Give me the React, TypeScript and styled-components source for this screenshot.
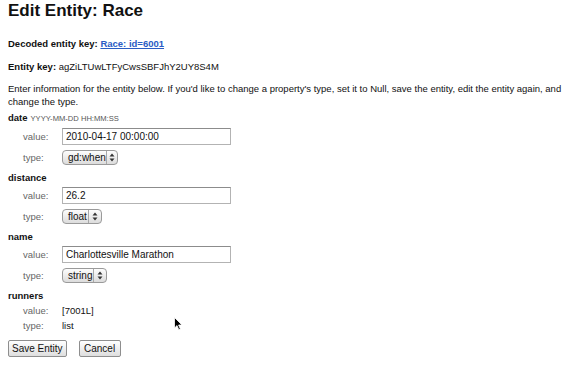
import React from "react";
import styled, { createGlobalStyle } from "styled-components";

const GlobalStyle = createGlobalStyle`
    body {
        margin: 0;
        padding: 0 8px;
        background: #fff;
        color: #111;
        font-family: "Liberation Sans", Arial, sans-serif;
        font-size: 9.5px;
    }
`

const Page = styled.div`
    position: relative;
    height: 369px;
`

const Title = styled.h1`
    margin: 0;
    font-size: 17px;
    line-height: 22px;
    font-weight: bold;
`

const KeyLine = styled.p<{ $top: number }>`
    margin: ${p => p.$top}px 0 0 0;
    line-height: 12px;
`

const Strong = styled.b`
    font-weight: bold;
`

const KeyLink = styled.a`
    color: #2a5cc4;
    font-weight: bold;
    text-decoration: underline;
`

const Intro = styled.p`
    margin: 9px 0 0 0;
    line-height: 13px;
`

const Form = styled.form`
    margin-top: 3px;
`

const Property = styled.div`
    margin-bottom: 3px;
`

const PropertyName = styled.div`
    font-weight: bold;
    line-height: 14px;
`

const Hint = styled.span`
    font-weight: normal;
    font-size: 7.6px;
    color: #555;
    margin-left: 3px;
`

const Row = styled.div<{ $height: number }>`
    display: grid;
    grid-template-columns: 39px auto;
    align-items: center;
    height: ${p => p.$height}px;
    padding-left: 15px;
`

const Label = styled.span`
    color: #666;
`

const Value = styled.span`
    color: #111;
`

const TextInput = styled.input`
    box-sizing: border-box;
    width: 169px;
    height: 17px;
    margin: 0;
    padding: 0 3px;
    border: 1px solid #b3b3b3;
    border-top-color: #8c8c8c;
    font-family: "Liberation Sans", Arial, sans-serif;
    font-size: 10px;
    color: #111;
    outline: none;
`

const SelectBox = styled.div<{ $width: number }>`
    box-sizing: border-box;
    display: flex;
    align-items: stretch;
    width: ${p => p.$width}px;
    height: 15px;
    border: 1px solid #9a9a9a;
    border-radius: 4px;
    background: linear-gradient(#fdfdfd, #dcdcdc);
    font-size: 10px;
    color: #111;
`

const SelectText = styled.span`
    flex: 1;
    display: flex;
    align-items: center;
    padding-left: 5px;
`

const SelectArrows = styled.span`
    width: 12px;
    display: flex;
    align-items: center;
    justify-content: center;
    border-left: 1px solid #a8a8a8;
`

const Buttons = styled.div`
    display: flex;
    gap: 12px;
    margin-top: 7px;
`

const Button = styled.button`
    box-sizing: border-box;
    height: 17px;
    min-width: 42px;
    padding: 0 3px;
    border: 1px solid #8e8e8e;
    border-radius: 2px;
    background: linear-gradient(#ffffff, #dedede);
    font-family: "Liberation Sans", Arial, sans-serif;
    font-size: 10px;
    color: #111;
`

const Cursor = styled.svg`
    position: absolute;
    left: 166px;
    top: 317px;
`

const Arrows = () => (
    <svg width="6" height="9" viewBox="0 0 6 9">
        <path d="M3 0.5 L5.5 3.5 H0.5 Z" fill="#333" />
        <path d="M3 8.5 L5.5 5.5 H0.5 Z" fill="#333" />
    </svg>
)

interface ISelectProps {
    value: string;
    width: number;
}

const Select = ({ value, width }: ISelectProps) => (
    <SelectBox $width={width}>
        <SelectText>{value}</SelectText>
        <SelectArrows><Arrows /></SelectArrows>
    </SelectBox>
)

interface IProperty {
    name: string;
    hint?: string;
    value: string;
    type: string;
    selectWidth: number;
}

const properties: IProperty[] = [
    { name: "date", hint: "YYYY-MM-DD HH:MM:SS", value: "2010-04-17 00:00:00", type: "gd:when", selectWidth: 56 },
    { name: "distance", value: "26.2", type: "float", selectWidth: 40 },
    { name: "name", value: "Charlottesville Marathon", type: "string", selectWidth: 45 },
]

export const App = () => {
    return (
        <Page>
            <GlobalStyle />
            <Title>Edit Entity: Race</Title>
            <KeyLine $top={16}>
                <Strong>Decoded entity key: </Strong>
                <KeyLink href="#">Race: id=6001</KeyLink>
            </KeyLine>
            <KeyLine $top={11}>
                <Strong>Entity key: </Strong>agZiLTUwLTFyCwsSBFJhY2UY8S4M
            </KeyLine>
            <Intro>
                Enter information for the entity below. If you'd like to change a property's type, set it to Null, save the entity, edit the entity again, and change the type.
            </Intro>
            <Form onSubmit={e => e.preventDefault()}>
                {properties.map(property => (
                    <Property key={property.name}>
                        <PropertyName>
                            {property.name}
                            {property.hint && <Hint>{property.hint}</Hint>}
                        </PropertyName>
                        <Row $height={21}>
                            <Label>value:</Label>
                            <TextInput defaultValue={property.value} />
                        </Row>
                        <Row $height={21}>
                            <Label>type:</Label>
                            <Select value={property.type} width={property.selectWidth} />
                        </Row>
                    </Property>
                ))}
                <Property>
                    <PropertyName>runners</PropertyName>
                    <Row $height={15}>
                        <Label>value:</Label>
                        <Value>[7001L]</Value>
                    </Row>
                    <Row $height={15}>
                        <Label>type:</Label>
                        <Value>list</Value>
                    </Row>
                </Property>
                <Buttons>
                    <Button type="submit">Save Entity</Button>
                    <Button type="button">Cancel</Button>
                </Buttons>
            </Form>
            <Cursor width="9" height="14" viewBox="0 0 9 14">
                <path d="M0.5 0.5 L0.5 11 L3 8.6 L4.8 12.8 L6.4 12.1 L4.6 8 L8 8 Z" fill="#000" stroke="#fff" strokeWidth="0.8" />
            </Cursor>
        </Page>
    )
}

export default App;
